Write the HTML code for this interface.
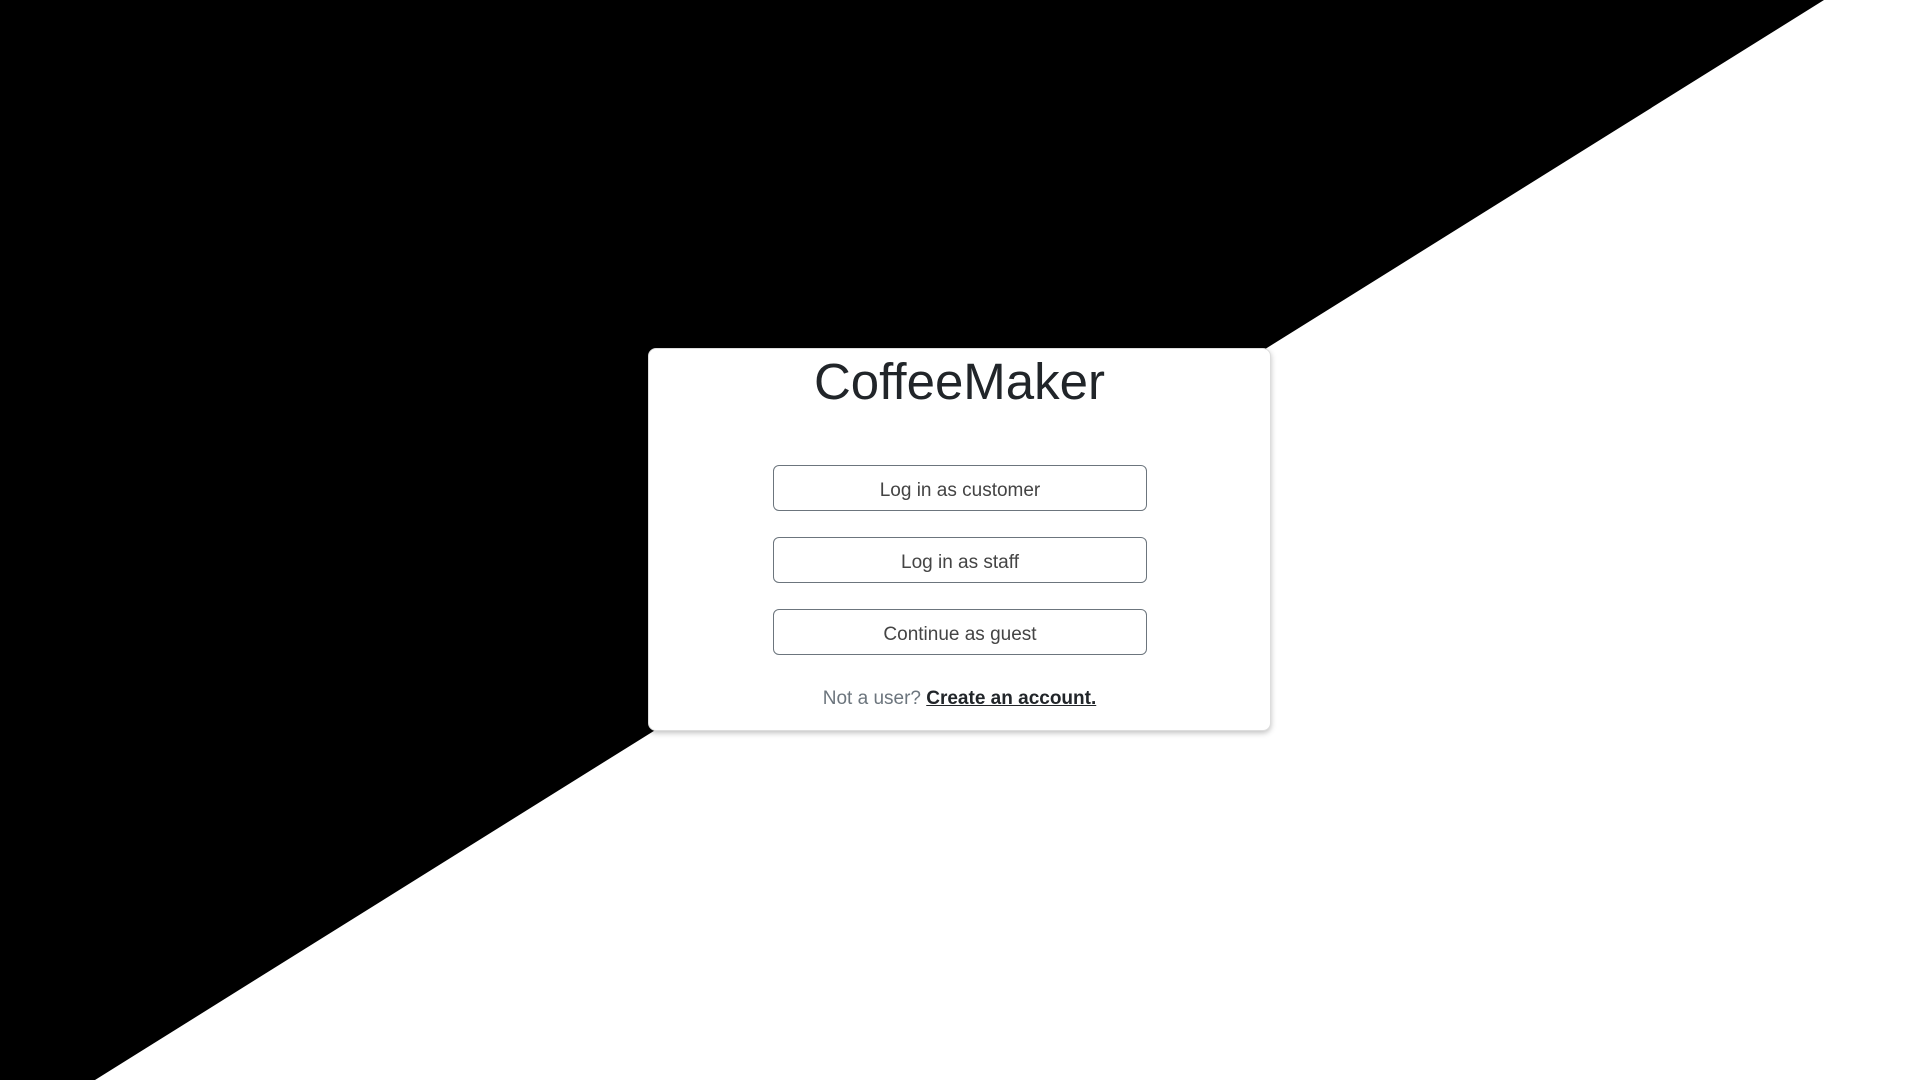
<!DOCTYPE html>
<html><head><style>
html,body{margin:0;padding:0;width:1920px;height:1080px;overflow:hidden;background:#fff;font-family:"Liberation Sans",sans-serif}
svg.bg{position:absolute;left:0;top:0}
.card{position:absolute;left:648px;top:348px;width:621px;height:381px;background:#fff;border:1px solid #ddd;border-radius:8px;box-shadow:0 2px 6px rgba(0,0,0,.25)}
h1{margin:0;position:absolute;top:352px;left:648px;width:623px;text-align:center;font-size:51px;font-weight:normal;color:#212529;line-height:60px}
.btn{position:absolute;left:773px;width:372px;height:44px;border:1.5px solid #6c757d;border-radius:6px;box-sizing:content-box;text-align:center;line-height:50px;font-size:19px;color:#444}
.foot{position:absolute;top:688px;left:648px;width:623px;text-align:center;font-size:19px;color:#6c757d}
.foot b{color:#212529;text-decoration:underline}
</style></head><body>
<svg class="bg" width="1920" height="1080"><polygon points="0,0 1824,0 95,1080 0,1080" fill="#000"/></svg>
<div class="card"></div>
<h1>CoffeeMaker</h1>
<div class="btn" style="top:465px">Log in as customer</div>
<div class="btn" style="top:537px">Log in as staff</div>
<div class="btn" style="top:609px">Continue as guest</div>
<div class="foot">Not a user? <b>Create an account.</b></div>
</body></html>
